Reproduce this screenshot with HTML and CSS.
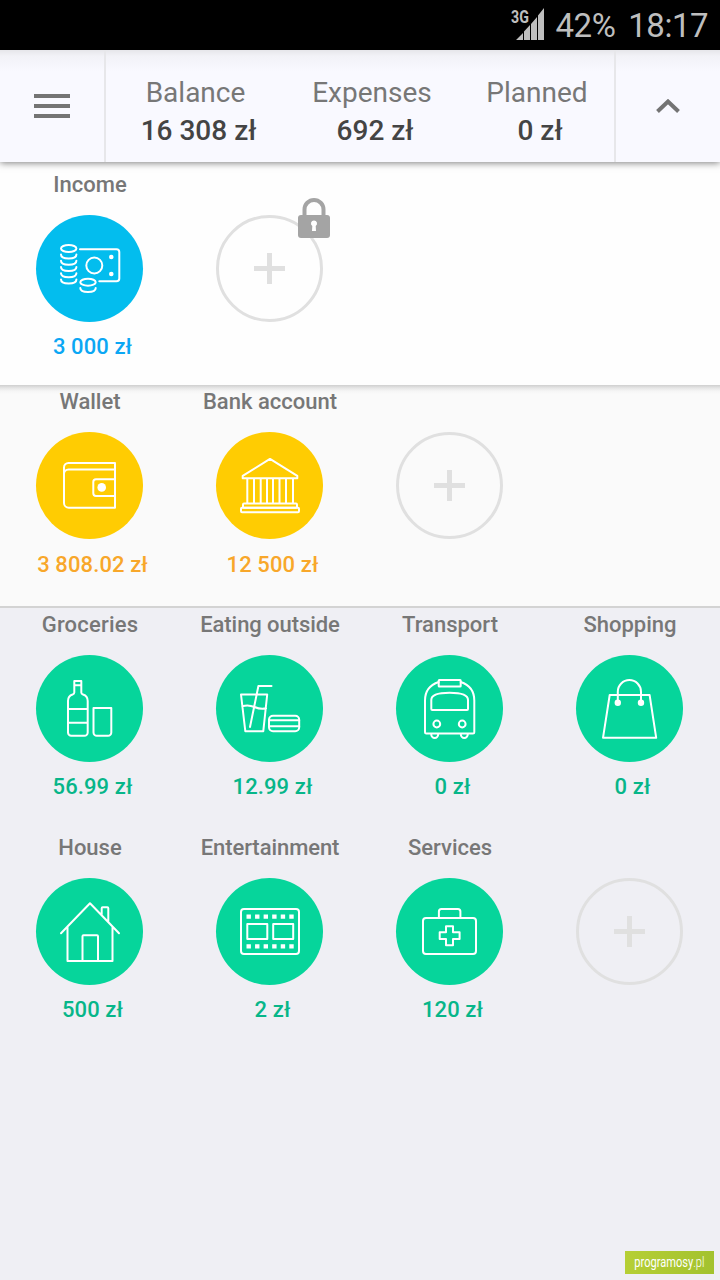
FILE: index.html
```html
<!DOCTYPE html>
<html lang="en">
<head>
<meta charset="utf-8">
<title>Budget</title>
<link rel="stylesheet" href="styles.css">
</head>
<body>
<div class="screen">
  <div class="status">
    <div class="signal">
      <span class="network">3G</span>
      <svg width="28" height="32" viewBox="0 0 28 32"><path d="M0 32L7 25V32ZM8 32V23.500L14 17V32ZM15 32V16L21 9V32ZM22 32V7.500L28 0V32Z" fill="#bebebe"/></svg>
    </div>
    <span class="battery">42%</span>
    <span class="clock">18:17</span>
  </div>

  <header class="topbar">
    <div class="menu"><span class="bar"></span><span class="bar"></span><span class="bar"></span></div>
    <div class="totals">
      <div class="total"><span class="label">Balance</span><span class="sum">16 308 zł</span></div>
      <div class="total"><span class="label">Expenses</span><span class="sum">692 zł</span></div>
      <div class="total"><span class="label">Planned</span><span class="sum">0 zł</span></div>
    </div>
    <div class="collapse"><svg width="24" height="15" viewBox="0 0 24 15"><path d="M1.500 12.500L12 2.500L22.500 12.500" fill="none" stroke="#747474" stroke-width="4"/></svg></div>
  </header>

  <section class="group income">
    <div class="cell">
      <span class="name">Income</span>
      <svg class="disc blue" viewBox="0 0 107 107">
        <ellipse cx="32.7" cy="33.500" rx="7.700" ry="3.500"/>
        <path d="M25 39.500q0 4 7.700 4t7.700-4M25 45.700q0 4 7.700 4t7.700-4M25 52q0 4 7.700 4t7.700-4M25 58.200q0 4 7.700 4t7.700-4M25 64.400q0 4 7.700 4t7.700-4"/>
        <path d="M44 34.300H80.500a2.800 2.800 0 0 1 2.800 2.800V63.500a2.800 2.800 0 0 1-2.800 2.800H63.300"/>
        <circle cx="58.300" cy="50.500" r="8"/>
        <g class="solid"><circle cx="75.300" cy="42" r="2.300"/><circle cx="75.300" cy="59" r="2.300"/></g>
        <ellipse cx="52" cy="67.200" rx="7.700" ry="3.500"/>
        <path d="M44.300 73q0 4 7.700 4t7.700-4"/>
      </svg>
      <span class="amount">3 000 zł</span>
    </div>
    <div class="cell">
      <span class="name"></span>
      <div class="add">
        <svg class="lock" width="32" height="40" viewBox="0 0 32 40"><path d="M6.500 18V11.500a9.500 9.500 0 0 1 19 0V18" fill="none" stroke="#a4a4a4" stroke-width="4"/><path d="M3 17H29a3 3 0 0 1 3 3V37a3 3 0 0 1-3 3H3a3 3 0 0 1-3-3V20a3 3 0 0 1 3-3Z" fill="#a4a4a4"/><path d="M16 22.500a3 3 0 0 0-1.700 5.500L14 33H18L17.700 28A3 3 0 0 0 16 22.500Z" fill="#fff"/></svg>
      </div>
    </div>
  </section>

  <section class="group accounts">
    <div class="cell">
      <span class="name">Wallet</span>
      <svg class="disc yellow" viewBox="0 0 107 107">
        <path d="M79 31H32.500a4.500 4.500 0 0 0-4.500 4.500V71a4.800 4.800 0 0 0 4.800 4.800H79Z"/>
        <path d="M28 42a4.500 4.500 0 0 1 4.500-4.500H79M79 47.200H60a2.700 2.700 0 0 0-2.700 2.700V61.300a2.700 2.700 0 0 0 2.700 2.700H79"/>
        <circle class="solid" cx="65.700" cy="55.400" r="4.300"/>
      </svg>
      <span class="amount">3 808.02 zł</span>
    </div>
    <div class="cell">
      <span class="name">Bank account</span>
      <svg class="disc yellow" viewBox="0 0 107 107">
        <path d="M54 26.900L81.300 43.900V46.200H26.700V43.900ZM31.300 46.500V71M38 46.500V71M44.700 46.500V71M51 46.500V71M57 46.500V71M63.500 46.500V71M70 46.500V71M77 46.500V71"/>
        <rect x="27" y="71.500" width="54" height="4.300" rx="1"/>
        <rect x="25" y="75.800" width="58" height="4.400" rx="1"/>
      </svg>
      <span class="amount">12 500 zł</span>
    </div>
    <div class="cell"><span class="name"></span><div class="add"></div></div>
  </section>

  <section class="group spending">
    <div class="cell">
      <span class="name wide">Groceries</span>
      <svg class="disc green" viewBox="0 0 107 107">
        <path d="M38.300 26H45.300V37.500Q45.300 39 47 39.500Q51.700 41 51.700 46V77.500a3.300 3.300 0 0 1-3.300 3.300H35.300A3.300 3.300 0 0 1 32 77.500V46Q32 41 36.600 39.500Q38.300 39 38.300 37.500ZM38.300 30.300H45.300M32 54H51.700M32 67.800H51.700"/>
        <path d="M57.500 53H75.300V77.500a3.300 3.300 0 0 1-3.300 3.300H60.800a3.300 3.300 0 0 1-3.300-3.300Z"/>
      </svg>
      <span class="amount">56.99 zł</span>
    </div>
    <div class="cell">
      <span class="name tight">Eating outside</span>
      <svg class="disc green" viewBox="0 0 107 107">
        <path d="M25 39.500H51.200L47.300 76.200H29.300ZM34 72L42.400 31H55.500M26.300 51.300Q32 49.200 38.500 52T50 53.300"/>
        <rect x="53" y="60.800" width="30.200" height="15.400" rx="4"/>
        <path d="M53 65.300H83.200M53 71.300H83.200"/>
      </svg>
      <span class="amount">12.99 zł</span>
    </div>
    <div class="cell">
      <span class="name">Transport</span>
      <svg class="disc green" viewBox="0 0 107 107">
        <path d="M42.700 27Q29 31.500 29 45.500V77.300a1.300 1.300 0 0 0 1.300 1.300H77a1.300 1.300 0 0 0 1.300-1.300V45.500Q78.300 31.500 64.700 27"/>
        <rect x="42.700" y="24.900" width="22" height="6.700" rx=".6"/>
        <path d="M35.300 54V45Q35.300 37.800 53.600 37.800T72 45V54a1 1 0 0 1-1 1H36.300a1 1 0 0 1-1-1Z"/>
        <circle cx="40.800" cy="69" r="3.400"/><circle cx="66.200" cy="69" r="3.400"/>
        <path d="M35.200 79a3.500 4 0 0 0 7 0M64.800 79a3.500 4 0 0 0 7 0"/>
      </svg>
      <span class="amount">0 zł</span>
    </div>
    <div class="cell">
      <span class="name">Shopping</span>
      <svg class="disc green" viewBox="0 0 107 107">
        <path d="M33.700 40H73.600L80.200 82.800H27ZM41.800 48V36.700a11.600 11.600 0 0 1 23.200 0V48"/>
        <g class="solid"><circle cx="41.800" cy="47.700" r="3.200"/><circle cx="65" cy="47.700" r="3.200"/></g>
      </svg>
      <span class="amount">0 zł</span>
    </div>
    <div class="cell">
      <span class="name">House</span>
      <svg class="disc green" viewBox="0 0 107 107">
        <path d="M25 55.200L54 25.200L83 55.200M31.500 49V83H76.500V49M46.500 83V58.200a1 1 0 0 1 1-1H61a1 1 0 0 1 1 1V83M65.700 36.500V30.300a1 1 0 0 1 1-1H71.300a1 1 0 0 1 1 1V43.500"/>
      </svg>
      <span class="amount">500 zł</span>
    </div>
    <div class="cell">
      <span class="name tight">Entertainment</span>
      <svg class="disc green" viewBox="0 0 107 107">
        <rect x="25" y="31" width="58" height="45" rx="3"/>
        <rect x="31.300" y="46" width="20" height="15"/><rect x="57.200" y="46" width="20" height="15"/>
        <path class="perforation" d="M30.500 38.600H78M30.500 68.400H78"/>
      </svg>
      <span class="amount">2 zł</span>
    </div>
    <div class="cell">
      <span class="name">Services</span>
      <svg class="disc green" viewBox="0 0 107 107">
        <rect x="27" y="40" width="53" height="36" rx="3"/>
        <path d="M42.900 40V33.500A2.500 2.500 0 0 1 45.400 31H61.900a2.500 2.500 0 0 1 2.500 2.500V40M50 48.200H57V54.300H63.600V61H57V67.300H50V61H43.700V54.300H50Z"/>
      </svg>
      <span class="amount">120 zł</span>
    </div>
    <div class="cell"><span class="name"></span><div class="add"></div></div>
  </section>

  <div class="watermark"><span>programosy<span class="tld">.pl</span></span></div>
</div>
</body>
</html>
```
FILE: styles.css
```css
* { box-sizing: border-box; }
body { margin: 0; font-family: Roboto, sans-serif; }
.screen { position: relative; width: 720px; height: 1280px; background: #efeff4; overflow: hidden; }

.status { display: flex; justify-content: flex-end; height: 50px; padding-right: 12px; background: #000; color: #bebebe; font-size: 33px; letter-spacing: -.5px; line-height: 51px; }
.signal { position: relative; width: 28px; height: 32px; margin: 8px 12px 0 0; line-height: 0; }
.network { position: absolute; left: -5px; top: 0; font-size: 18px; font-weight: 700; letter-spacing: 0; line-height: 18px; transform: scaleX(.79); transform-origin: left; }
.battery { margin-right: 13px; }

.topbar { position: relative; z-index: 2; display: flex; height: 112px; background: linear-gradient(#e6e6ea, #f2f2f7 6px, #f9f9ff 22px); box-shadow: 0 1px 7px rgba(0,0,0,.5); }
.menu { width: 106px; padding: 44px 34px 0; border-right: 2px solid #e7e7ea; display: flex; flex-direction: column; gap: 6px; }
.bar { height: 4px; width: 36px; background: #747474; }
.totals { display: grid; grid-template-columns: 178px 175px 155px; width: 508px; }
.total { display: flex; flex-direction: column; align-items: center; padding-top: 24px; }
.label { font-size: 28px; line-height: 38px; color: #777; padding-left: 1px; }
.sum { font-size: 28px; line-height: 38px; font-weight: 500; color: #444; padding-left: 7px; }
.collapse { flex: 1; border-left: 2px solid #e7e7ea; padding: 49px 0 0 40px; }

.group { display: grid; grid-template-columns: repeat(4, 180px); grid-auto-rows: 223px; }
.income { height: 223px; padding-top: 10px; background: #fefefe; }
.accounts { height: 223px; padding-top: 4px; background: linear-gradient(#cfcfcf, #e6e6e6 3px, #f5f5f5 6px, #fafafa 9px); border-bottom: 2px solid #d3d3d3; }
.spending { padding-top: 4px; }
.cell { display: flex; flex-direction: column; align-items: center; }
.name { height: 26px; font-size: 22px; line-height: 26px; font-weight: 500; color: #777; }
.wide { letter-spacing: .2px; }
.tight { letter-spacing: -.07px; }
.disc, .add { width: 107px; height: 107px; margin: 17px 1px 12px 0; border-radius: 50%; }
.disc { fill: none; stroke: #fff; stroke-width: 2; stroke-linejoin: round; stroke-linecap: round; }
.blue { background: #03bdee; }
.yellow { background: #ffcc02; }
.green { background: #06d59b; }
.solid { fill: #fff; stroke: none; }
.perforation { stroke-width: 4.400; stroke-dasharray: 4.400 4.160; stroke-linecap: butt; }
.amount { font-size: 22px; line-height: 26px; font-weight: 500; letter-spacing: .1px; padding-left: 5px; color: #07b689; }
.income .amount { color: #0ba7f4; }
.accounts .amount { color: #f8a72a; padding-top: 1px; }
.add { position: relative; border: 3px solid #e0e0e0; background: linear-gradient(#e0e0e0, #e0e0e0) center / 31px 5px no-repeat, linear-gradient(#e0e0e0, #e0e0e0) center / 5px 31px no-repeat; }
.lock { position: absolute; left: 79px; top: -20px; }

.watermark { position: absolute; left: 625px; top: 1251px; width: 89px; height: 23px; background: linear-gradient(90deg, #b6cf35, #a3c22e); color: #fff; font-size: 14px; line-height: 22px; text-align: center; }
.watermark > span { display: inline-block; white-space: nowrap; transform: scaleX(.79); margin: 0 -10px; }
.tld { font-weight: 300; }
```
